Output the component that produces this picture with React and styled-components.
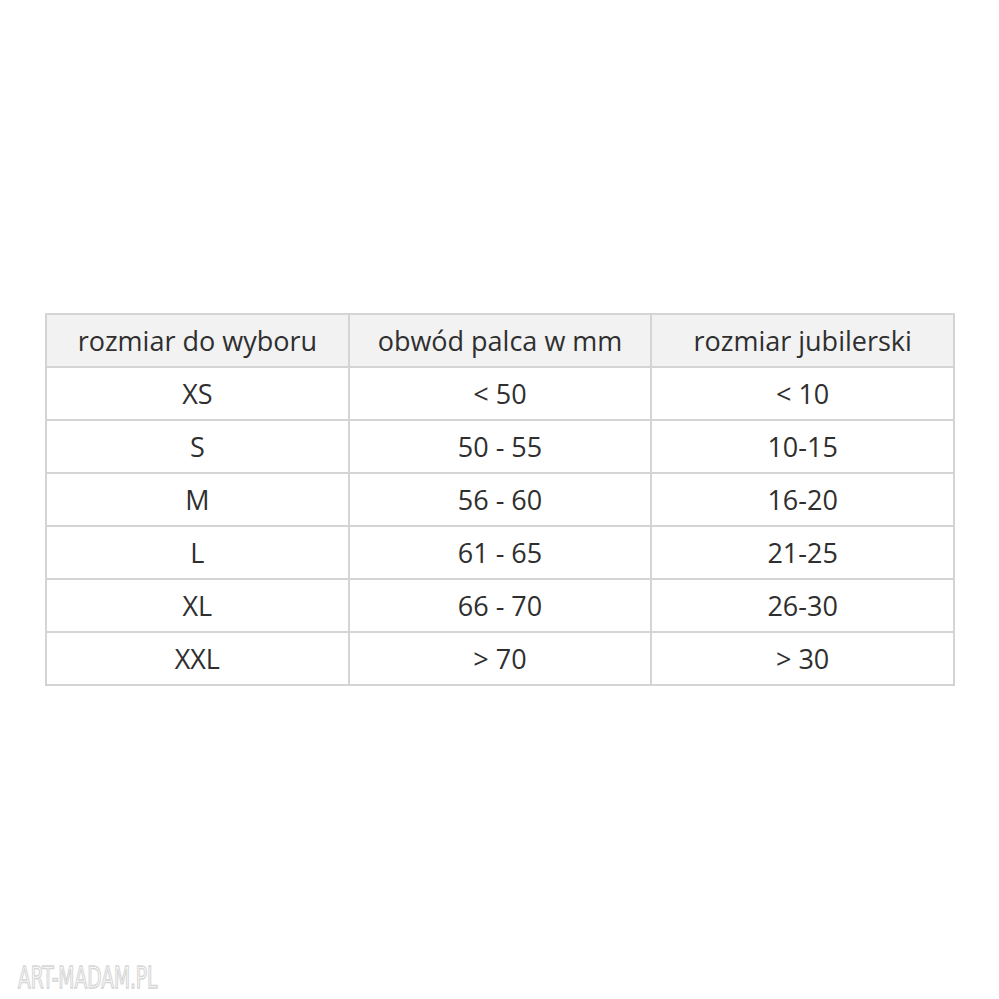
import React from "react";
import styled, { createGlobalStyle } from "styled-components";

const GlobalStyle = createGlobalStyle`
    html, body {
        margin: 0;
        padding: 0;
        background: #ffffff;
    }
`;

const Page = styled.div`
    width: 999px;
    height: 999px;
    position: relative;
    box-sizing: border-box;
    padding: 313px 0 0 45px;
    font-family: "Open Sans", "DejaVu Sans", sans-serif;
    color: #2f2f2f;
`;

const Table = styled.table`
    border-collapse: collapse;
    width: 910px;
    table-layout: fixed;
    border: 2px solid #d4d4d4;
`;

const HeadCell = styled.th`
    height: 51px;
    background: #f2f2f2;
    font-weight: 400;
    font-size: 27px;
    text-align: center;
    border: 2px solid #d4d4d4;
    padding: 0;
`;

const Cell = styled.td`
    height: 51px;
    font-size: 27px;
    text-align: center;
    border: 2px solid #d4d4d4;
    padding: 0;
`;

// znak wodny w lewym dolnym rogu
const Watermark = styled.div`
    position: absolute;
    left: 18px;
    top: 958px;
    font-family: "DejaVu Sans Condensed", "DejaVu Sans", sans-serif;
    font-size: 30px;
    line-height: 40px;
    color: #ffffff;
    -webkit-text-stroke: 1.4px #d6d6d6;
    transform: scaleX(0.69);
    transform-origin: left center;
    white-space: nowrap;
`;

const rows = [
    ["XS", "< 50", "< 10"],
    ["S", "50 - 55", "10-15"],
    ["M", "56 - 60", "16-20"],
    ["L", "61 - 65", "21-25"],
    ["XL", "66 - 70", "26-30"],
    ["XXL", "> 70", "> 30"],
];

const App = () => (
    <>
        <GlobalStyle />
        <Page>
            <Table>
                <thead>
                    <tr>
                        <HeadCell>rozmiar do wyboru</HeadCell>
                        <HeadCell>obwód palca w mm</HeadCell>
                        <HeadCell>rozmiar jubilerski</HeadCell>
                    </tr>
                </thead>
                <tbody>
                    {rows.map((row) => (
                        <tr key={row[0]}>
                            {row.map((value, index) => (
                                <Cell key={index}>{value}</Cell>
                            ))}
                        </tr>
                    ))}
                </tbody>
            </Table>
            <Watermark>ART-MADAM.PL</Watermark>
        </Page>
    </>
);

export default App;
